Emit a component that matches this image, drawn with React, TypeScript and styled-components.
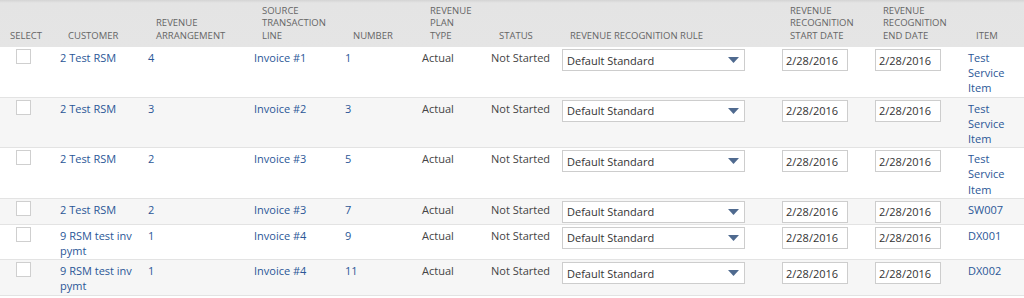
import styled, { createGlobalStyle } from "styled-components";

const COLUMNS = "55px 88px 106px 91px 77px 69px 71px 220px 93px 93px 61px";

const HEADERS: string[][] = [
  ["SELECT"],
  ["CUSTOMER"],
  ["REVENUE", "ARRANGEMENT"],
  ["SOURCE", "TRANSACTION", "LINE"],
  ["NUMBER"],
  ["REVENUE", "PLAN", "TYPE"],
  ["STATUS"],
  ["REVENUE RECOGNITION RULE"],
  ["REVENUE", "RECOGNITION", "START DATE"],
  ["REVENUE", "RECOGNITION", "END DATE"],
  ["ITEM"],
];

type Line = {
  customer: string;
  arrangement: string;
  source: string;
  number: string;
  item: string;
};

const LINES: Line[] = [
  { customer: "2 Test RSM", arrangement: "4", source: "Invoice #1", number: "1", item: "Test Service Item" },
  { customer: "2 Test RSM", arrangement: "3", source: "Invoice #2", number: "3", item: "Test Service Item" },
  { customer: "2 Test RSM", arrangement: "2", source: "Invoice #3", number: "5", item: "Test Service Item" },
  { customer: "2 Test RSM", arrangement: "2", source: "Invoice #3", number: "7", item: "SW007" },
  { customer: "9 RSM test inv pymt", arrangement: "1", source: "Invoice #4", number: "9", item: "DX001" },
  { customer: "9 RSM test inv pymt", arrangement: "1", source: "Invoice #4", number: "11", item: "DX002" },
];

const GlobalStyle = createGlobalStyle`
  body {
    margin: 0;
    background: #fff;
    font-family: "Open Sans", "Liberation Sans", sans-serif;
  }
`;

const Table = styled.div`
  width: 1024px;
`;

const HeaderRow = styled.div`
  display: grid;
  grid-template-columns: ${COLUMNS};
  align-items: end;
  height: 47px;
  box-sizing: border-box;
  padding-bottom: 5px;
  background: linear-gradient(#d4d4d4 0, #e4e4e4 3px, #e5e5e5 100%);
`;

const HeaderCell = styled.div<{ $first?: boolean }>`
  padding-left: ${(p) => (p.$first ? "10px" : "13px")};
  font-size: 9.5px;
  line-height: 12.5px;
  color: #666;
  white-space: nowrap;
`;

const Row = styled.div<{ $alt: boolean }>`
  display: grid;
  grid-template-columns: ${COLUMNS};
  align-items: start;
  padding: 2px 0 1px;
  background: ${(p) => (p.$alt ? "#f6f6f6" : "#fff")};
  border-bottom: 1px solid #e3e3e3;
`;

const Cell = styled.div`
  padding: 1px 4px 0 5px;
  font-size: 11px;
  line-height: 15.2px;
  color: #444;
`;

const Link = styled.a`
  color: #2b5797;
  text-decoration: none;
  cursor: pointer;
`;

const CheckCell = styled.div`
  padding-left: 16px;
`;

const Checkbox = styled.span`
  display: block;
  width: 15px;
  height: 15px;
  box-sizing: border-box;
  border: 1px solid #cfcfcf;
  background: #fff;
`;

const FieldCell = styled.div`
  padding-left: 5px;
`;

const Dropdown = styled.div`
  display: flex;
  align-items: center;
  justify-content: space-between;
  width: 183px;
  height: 22px;
  box-sizing: border-box;
  padding: 0 5px 0 4px;
  border: 1px solid #cdcdcd;
  background: #fff;
  font-size: 11px;
  color: #333;
`;

const DateInput = styled.div`
  display: flex;
  align-items: center;
  width: 66px;
  height: 22px;
  box-sizing: border-box;
  padding-left: 3px;
  border: 1px solid #cdcdcd;
  background: #fff;
  font-size: 11px;
  color: #333;
`;

function Arrow() {
  return (
    <svg width="11" height="6" viewBox="0 0 11 6">
      <path d="M0 0h11L5.5 6z" fill="#4f6a8f" />
    </svg>
  );
}

export default function App() {
  return (
    <>
      <GlobalStyle />
      <Table>
        <HeaderRow>
          {HEADERS.map((lines, i) => (
            <HeaderCell key={i} $first={i === 0}>
              {lines.map((l, j) => (
                <div key={j}>{l}</div>
              ))}
            </HeaderCell>
          ))}
        </HeaderRow>
        {LINES.map((line, i) => (
          <Row key={i} $alt={i % 2 === 1}>
            <CheckCell>
              <Checkbox />
            </CheckCell>
            <Cell>
              <Link>{line.customer}</Link>
            </Cell>
            <Cell>
              <Link>{line.arrangement}</Link>
            </Cell>
            <Cell>
              <Link>{line.source}</Link>
            </Cell>
            <Cell>
              <Link>{line.number}</Link>
            </Cell>
            <Cell>Actual</Cell>
            <Cell>Not Started</Cell>
            <FieldCell>
              <Dropdown>
                <span>Default Standard</span>
                <Arrow />
              </Dropdown>
            </FieldCell>
            <FieldCell>
              <DateInput>2/28/2016</DateInput>
            </FieldCell>
            <FieldCell>
              <DateInput>2/28/2016</DateInput>
            </FieldCell>
            <Cell>
              <Link>{line.item}</Link>
            </Cell>
          </Row>
        ))}
      </Table>
    </>
  );
}
